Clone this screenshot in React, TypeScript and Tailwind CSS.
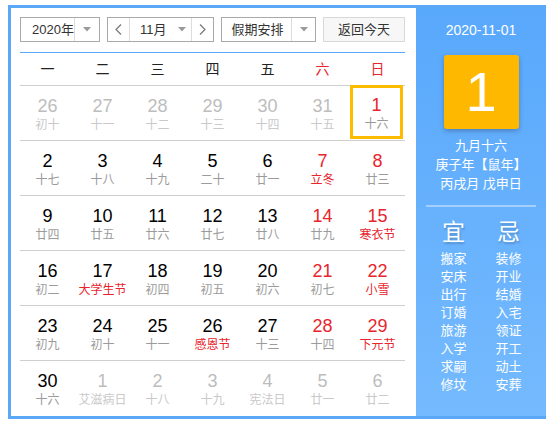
import React from "react";

type Day = { n: number; lunar: string; other?: boolean; redNum?: boolean; redLunar?: boolean; today?: boolean };

const weeks: Day[][] = [
	[
		{ n: 26, lunar: "初十", other: true },
		{ n: 27, lunar: "十一", other: true },
		{ n: 28, lunar: "十二", other: true },
		{ n: 29, lunar: "十三", other: true },
		{ n: 30, lunar: "十四", other: true },
		{ n: 31, lunar: "十五", other: true },
		{ n: 1, lunar: "十六", redNum: true, today: true },
	],
	[
		{ n: 2, lunar: "十七" },
		{ n: 3, lunar: "十八" },
		{ n: 4, lunar: "十九" },
		{ n: 5, lunar: "二十" },
		{ n: 6, lunar: "廿一" },
		{ n: 7, lunar: "立冬", redNum: true, redLunar: true },
		{ n: 8, lunar: "廿三", redNum: true },
	],
	[
		{ n: 9, lunar: "廿四" },
		{ n: 10, lunar: "廿五" },
		{ n: 11, lunar: "廿六" },
		{ n: 12, lunar: "廿七" },
		{ n: 13, lunar: "廿八" },
		{ n: 14, lunar: "廿九", redNum: true },
		{ n: 15, lunar: "寒衣节", redNum: true, redLunar: true },
	],
	[
		{ n: 16, lunar: "初二" },
		{ n: 17, lunar: "大学生节", redLunar: true },
		{ n: 18, lunar: "初四" },
		{ n: 19, lunar: "初五" },
		{ n: 20, lunar: "初六" },
		{ n: 21, lunar: "初七", redNum: true },
		{ n: 22, lunar: "小雪", redNum: true, redLunar: true },
	],
	[
		{ n: 23, lunar: "初九" },
		{ n: 24, lunar: "初十" },
		{ n: 25, lunar: "十一" },
		{ n: 26, lunar: "感恩节", redLunar: true },
		{ n: 27, lunar: "十三" },
		{ n: 28, lunar: "十四", redNum: true },
		{ n: 29, lunar: "下元节", redNum: true, redLunar: true },
	],
	[
		{ n: 30, lunar: "十六" },
		{ n: 1, lunar: "艾滋病日", other: true },
		{ n: 2, lunar: "十八", other: true },
		{ n: 3, lunar: "十九", other: true },
		{ n: 4, lunar: "宪法日", other: true },
		{ n: 5, lunar: "廿一", other: true },
		{ n: 6, lunar: "廿二", other: true },
	],
];

const yi = ["搬家", "安床", "出行", "订婚", "旅游", "入学", "求嗣", "修坟"];
const ji = ["装修", "开业", "结婚", "入宅", "领证", "开工", "动土", "安葬"];

function Caret() {
	return (
		<svg width="8" height="5" viewBox="0 0 8 5">
			<path d="M0 0 L8 0 L4 4.5 Z" fill="#9a9a9a" />
		</svg>
	);
}

function Chevron({ dir }: { dir: "left" | "right" }) {
	return (
		<svg width="7" height="11" viewBox="0 0 7 11">
			<polyline
				points={dir === "left" ? "6,0.5 1,5.5 6,10.5" : "1,0.5 6,5.5 1,10.5"}
				fill="none"
				stroke="#777"
				strokeWidth="1.2"
			/>
		</svg>
	);
}

function Cell({ d }: { d: Day }) {
	const numColor = d.other ? "text-[#bdbdbd]" : d.redNum ? "text-[#e8252e]" : "text-black";
	const lunarColor = d.other ? "text-[#c9c9c9]" : d.redLunar ? "text-[#e8252e]" : "text-[#9b9b9b]";
	return (
		<div
			className={
				d.today
					? "flex flex-col items-center border-[3px] border-[#ffbb00] mr-[2px] pt-[7px] h-[54px] -mt-px"
					: "flex flex-col items-center pt-[10px]"
			}
		>
			<div className={`text-[18px] leading-[20px] ${numColor}`}>{d.n}</div>
			<div className={`text-[12px] leading-[16px] mt-px whitespace-nowrap ${lunarColor}`}>{d.lunar}</div>
		</div>
	);
}

export default function App() {
	return (
		<div className="w-[551px] h-[424px] bg-white pt-[5px] pl-[8px] font-['Liberation_Sans','Noto_Sans_CJK_SC',sans-serif]">
			<div className="w-[538px] h-[414px] border-l-[3px] border-t-[3px] border-b-[3px] border-[#5aa8f6] flex overflow-hidden">
				{/* left: calendar */}
				<div className="w-[405px] h-full pt-[9px] pl-[9px] pr-[11px] flex flex-col overflow-hidden">
					<div className="flex h-[26px] text-[13px] text-[#333]">
						<div className="w-[80px] flex border border-[#a9a9a9]">
							<div className="flex-1 flex items-center pl-[11px]">2020年</div>
							<div className="w-[25px] flex items-center justify-center border-l border-[#dcdcdc]">
								<Caret />
							</div>
						</div>
						<div className="w-[107px] ml-[7px] flex border border-[#a9a9a9]">
							<div className="w-[22px] flex items-center justify-center border-r border-[#dcdcdc]">
								<Chevron dir="left" />
							</div>
							<div className="flex-1 flex items-center pl-[10px]">
								<span>11月</span>
								<span className="ml-[11px] flex">
									<Caret />
								</span>
							</div>
							<div className="w-[22px] flex items-center justify-center border-l border-[#dcdcdc]">
								<Chevron dir="right" />
							</div>
						</div>
						<div className="w-[95px] ml-[7px] flex border border-[#a9a9a9]">
							<div className="flex-1 flex items-center justify-center pl-[2px]">假期安排</div>
							<div className="w-[24px] flex items-center justify-center border-l border-[#dcdcdc]">
								<Caret />
							</div>
						</div>
						<div className="w-[82px] ml-[7px] flex items-center justify-center border border-[#d8d8d8] bg-[#f7f7f7]">
							返回今天
						</div>
					</div>

					<div className="mt-[10px] h-[35px] border-t border-b border-t-[#5aa8f6] border-b-[#cfcfcf] grid grid-cols-7 items-center text-[14px]">
						{["一", "二", "三", "四", "五", "六", "日"].map((w, i) => (
							<div key={w} className={`text-center ${i >= 5 ? "text-[#e8252e]" : "text-[#222]"}`}>
								{w}
							</div>
						))}
					</div>

					{weeks.map((week, i) => (
						<div
							key={i}
							className={`grid grid-cols-7 h-[55px] shrink-0 ${i < 5 ? "border-b border-[#cfcfcf]" : ""}`}
						>
							{week.map((d, j) => (
								<Cell key={j} d={d} />
							))}
						</div>
					))}
				</div>

				{/* right: day detail */}
				<div className="w-[130px] h-full bg-gradient-to-b from-[#58a8fc] to-[#75bafe] text-white flex flex-col items-center">
					<div className="mt-[12px] text-[14px] leading-[20px]">2020-11-01</div>
					<div className="mt-[15px] w-[75px] h-[74px] rounded-[3px] bg-[#ffb800] shadow-[0_2px_5px_rgba(0,0,0,0.25)] flex items-center justify-center text-[56px] leading-none">
						1
					</div>
					<div className="mt-[7px] text-[13px] leading-[19px] text-center">
						<div>九月十六</div>
						<div>庚子年【鼠年】</div>
						<div>丙戌月 戊申日</div>
					</div>
					<div className="mt-[12px] w-[110px] h-[2px] bg-[#a4cffc]" />
					<div className="flex gap-[15px] mt-[10px]">
						{[
							{ t: "宜", list: yi },
							{ t: "忌", list: ji },
						].map((c) => (
							<div key={c.t} className="w-[40px] flex flex-col items-center">
								<div className="text-[23px] leading-[30px] [text-shadow:1px_2px_2px_rgba(0,0,0,0.2)]">{c.t}</div>
								<div className="mt-[3px] text-[13px] leading-[18px] text-center">
									{c.list.map((x) => (
										<div key={x}>{x}</div>
									))}
								</div>
							</div>
						))}
					</div>
				</div>
			</div>
		</div>
	);
}
